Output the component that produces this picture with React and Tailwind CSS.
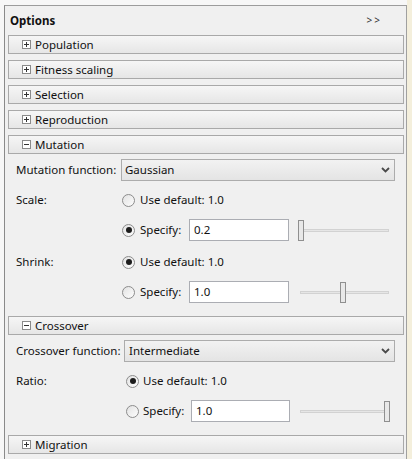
import React from "react";

const font = { fontFamily: '"Noto Sans", "Segoe UI", Arial, sans-serif' };

function PlusMinus({ plus }) {
  return (
    <span className="relative w-[9px] h-[9px] border border-[#8a8a8a] bg-white shrink-0 flex items-center justify-center">
      <span className="absolute w-[5px] h-[1px] bg-[#333]" />
      {plus && <span className="absolute w-[1px] h-[5px] bg-[#333]" />}
    </span>
  );
}

function Header({ title, plus = true, className = "" }) {
  return (
    <div
      className={`h-[19px] ml-[3px] mr-[2px] border border-[#a9a9a9] bg-gradient-to-b from-[#f6f6f6] to-[#e6e6e6] flex items-center pl-[13px] ${className}`}
    >
      <PlusMinus plus={plus} />
      <span className="ml-[4px] text-[11.5px] leading-none text-[#111] whitespace-nowrap">{title}</span>
    </div>
  );
}

function Radio({ checked }) {
  return (
    <span className="w-[13px] h-[13px] rounded-full border border-[#8c8c8c] bg-gradient-to-br from-[#e2e2e2] to-[#fdfdfd] flex items-center justify-center shrink-0">
      {checked && <span className="w-[6px] h-[6px] rounded-full bg-[#1c1c1c]" />}
    </span>
  );
}

function Dropdown({ value, padClass }) {
  return (
    <div
      className={`flex-1 h-[22px] border border-[#acacac] bg-gradient-to-b from-[#f2f2f2] to-[#e4e4e4] flex items-center ${padClass} pr-[4px]`}
    >
      <span className="flex-1 text-[11.5px] text-[#111] whitespace-nowrap">{value}</span>
      <svg width="9" height="6" viewBox="0 0 9 6">
        <polyline points="1,1 4.5,4.5 8,1" fill="none" stroke="#4a4a4a" strokeWidth="1.8" />
      </svg>
    </div>
  );
}

function Slider({ thumbClass }) {
  return (
    <div className="relative w-[92px] h-[21px]">
      <div className="absolute left-[2px] right-[1px] top-[9px] h-[3px] border border-[#d2d2d2] bg-[#e6e6e6]" />
      <div className={`absolute top-0 h-[21px] w-[6px] border border-[#8f8f8f] bg-[#e8e8e8] ${thumbClass}`} />
    </div>
  );
}

function Input({ value, widthClass }) {
  return (
    <div className={`h-[22px] ${widthClass} border border-[#abadb3] bg-white flex items-center pl-[4px]`}>
      <span className="text-[11.5px] text-[#111]">{value}</span>
    </div>
  );
}

const lbl = "text-[11.5px] text-[#111] whitespace-nowrap shrink-0";

export default function App() {
  return (
    <div className="w-[412px] h-[459px] flex bg-[#f7f7f7] overflow-hidden" style={font}>
      <div className="w-[407px] pt-[5px] pl-[4px] flex flex-col">
        <div className="flex-1 border-l border-t border-r border-l-[#8a8a8a] border-t-[#9c9c9c] border-r-[#a0a0a0] bg-[#f0f0f0] flex flex-col">
          <div className="h-[29px] flex items-center pl-[5px] pr-[24px]">
            <span className="flex-1 text-[11.5px] font-bold text-[#111]">Options</span>
            <span className="text-[10px] tracking-[2px] text-[#333]">&gt;&gt;</span>
          </div>

          <Header title="Population" />
          <Header title="Fitness scaling" className="mt-[6px]" />
          <Header title="Selection" className="mt-[6px]" />
          <Header title="Reproduction" className="mt-[6px]" />
          <Header title="Mutation" plus={false} className="mt-[6px]" />

          {/* Mutation content */}
          <div className="pl-[11px] pr-[11px] flex flex-col">
            <div className="mt-[5px] h-[22px] flex items-center">
              <span className={`w-[105px] ${lbl}`}>Mutation function:</span>
              <Dropdown value="Gaussian" padClass="pl-[3px]" />
            </div>
            <div className="mt-[8px] h-[22px] flex items-center">
              <span className={`w-[105px] ${lbl}`}>Scale:</span>
              <span className="ml-[1px]"><Radio checked={false} /></span>
              <span className={`ml-[5px] ${lbl}`}>Use default: 1.0</span>
            </div>
            <div className="mt-[8px] h-[22px] flex items-center">
              <span className="w-[105px] shrink-0" />
              <span className="ml-[1px]"><Radio checked /></span>
              <span className={`ml-[5px] w-[49px] ${lbl}`}>Specify:</span>
              <Input value="0.2" widthClass="w-[100px]" />
              <span className="ml-[9px]"><Slider thumbClass="left-[0px]" /></span>
            </div>
            <div className="mt-[10px] h-[22px] flex items-center">
              <span className={`w-[105px] ${lbl}`}>Shrink:</span>
              <span className="ml-[1px]"><Radio checked /></span>
              <span className={`ml-[5px] ${lbl}`}>Use default: 1.0</span>
            </div>
            <div className="mt-[8px] h-[22px] flex items-center">
              <span className="w-[105px] shrink-0" />
              <span className="ml-[1px]"><Radio checked={false} /></span>
              <span className={`ml-[5px] w-[49px] ${lbl}`}>Specify:</span>
              <Input value="1.0" widthClass="w-[100px]" />
              <span className="ml-[9px]"><Slider thumbClass="left-[42px]" /></span>
            </div>
          </div>

          <Header title="Crossover" plus={false} className="mt-[13px]" />

          {/* Crossover content */}
          <div className="pl-[11px] pr-[11px] flex flex-col">
            <div className="mt-[5px] h-[22px] flex items-center">
              <span className={`w-[108px] ${lbl}`}>Crossover function:</span>
              <Dropdown value="Intermediate" padClass="pl-[4px]" />
            </div>
            <div className="mt-[8px] h-[22px] flex items-center">
              <span className={`w-[108px] ${lbl}`}>Ratio:</span>
              <span className="ml-[2px]"><Radio checked /></span>
              <span className={`ml-[4px] ${lbl}`}>Use default: 1.0</span>
            </div>
            <div className="mt-[8px] h-[22px] flex items-center">
              <span className="w-[108px] shrink-0" />
              <span className="ml-[2px]"><Radio checked={false} /></span>
              <span className={`ml-[4px] w-[48px] ${lbl}`}>Specify:</span>
              <Input value="1.0" widthClass="w-[99px]" />
              <span className="ml-[8px]"><Slider thumbClass="left-[86px]" /></span>
            </div>
          </div>

          <Header title="Migration" className="mt-[13px]" />
        </div>
      </div>
      <div className="flex-1 bg-[#f4efdc]" />
    </div>
  );
}
